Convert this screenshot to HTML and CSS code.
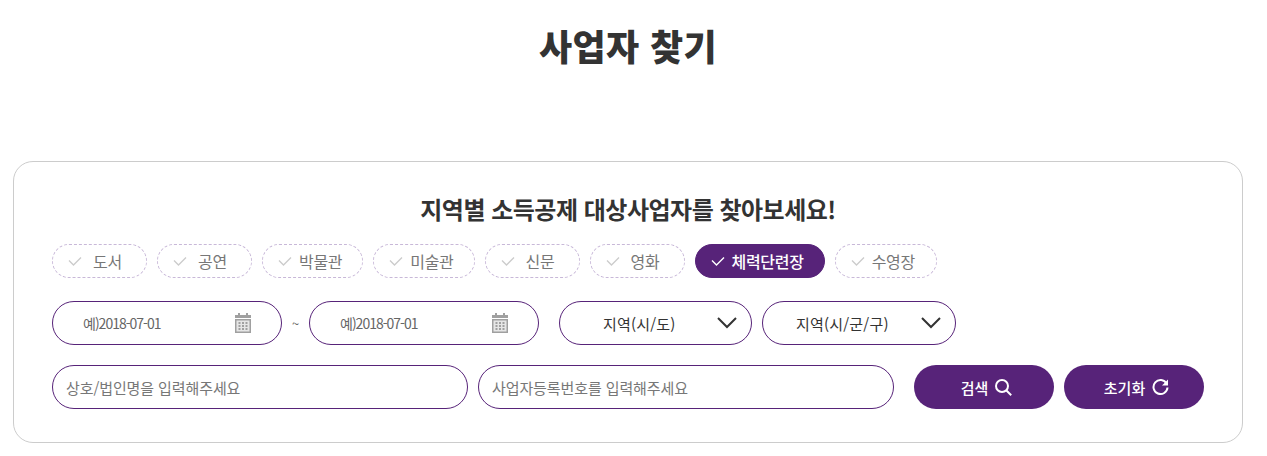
FILE: index.html
```html
<!DOCTYPE html>
<html lang="ko">
<head>
  <meta charset="UTF-8" />
  <meta name="viewport" content="width=device-width, initial-scale=1.0"/>
  <title>사업자 찾기</title>
  <link rel="stylesheet" href="styles.css">
</head>
<body>

<div class="page">
  <h1 class="page-title">사업자 찾기</h1>

  <div class="search-box">
    <h2 class="search-title">지역별 소득공제 대상사업자를 찾아보세요!</h2>

    <!-- 업종 선택 -->
    <div class="chips">
      <label class="chip"><svg class="check" viewBox="0 0 14 11"><path d="M1 4.5l4.5 4.5 7.5-7.5"/></svg><span class="chip-label">도서</span></label>
      <label class="chip"><svg class="check" viewBox="0 0 14 11"><path d="M1 4.5l4.5 4.5 7.5-7.5"/></svg><span class="chip-label">공연</span></label>
      <label class="chip"><svg class="check" viewBox="0 0 14 11"><path d="M1 4.5l4.5 4.5 7.5-7.5"/></svg><span class="chip-label">박물관</span></label>
      <label class="chip"><svg class="check" viewBox="0 0 14 11"><path d="M1 4.5l4.5 4.5 7.5-7.5"/></svg><span class="chip-label">미술관</span></label>
      <label class="chip"><svg class="check" viewBox="0 0 14 11"><path d="M1 4.5l4.5 4.5 7.5-7.5"/></svg><span class="chip-label">신문</span></label>
      <label class="chip"><svg class="check" viewBox="0 0 14 11"><path d="M1 4.5l4.5 4.5 7.5-7.5"/></svg><span class="chip-label">영화</span></label>
      <label class="chip active"><svg class="check" viewBox="0 0 14 11"><path d="M1 4.5l4.5 4.5 7.5-7.5"/></svg><span class="chip-label">체력단련장</span></label>
      <label class="chip wide"><svg class="check" viewBox="0 0 14 11"><path d="M1 4.5l4.5 4.5 7.5-7.5"/></svg><span class="chip-label">수영장</span></label>
    </div>

    <!-- 기간, 지역 -->
    <div class="row">
      <div class="date-field">
        <input type="text" class="date-input" placeholder="예)2018-07-01" />
        <svg class="calendar" viewBox="0 0 16 20">
          <path class="cal-top" d="M0 2h3V0h2v2h6V0h2v2h3v3H0z"/>
          <rect class="cal-frame" x="0.75" y="6.75" width="14.5" height="12.5"/>
          <path class="cal-cells" d="M3.5 9h2v2h-2zM7 9h2v2H7zM10.5 9h2v2h-2zM3.5 12h2v2h-2zM7 12h2v2H7zM10.5 12h2v2h-2zM3.5 15h2v2h-2zM7 15h2v2H7zM10.5 15h2v2h-2z"/>
        </svg>
      </div>
      <span class="tilde">~</span>
      <div class="date-field">
        <input type="text" class="date-input" placeholder="예)2018-07-01" />
        <svg class="calendar" viewBox="0 0 16 20">
          <path class="cal-top" d="M0 2h3V0h2v2h6V0h2v2h3v3H0z"/>
          <rect class="cal-frame" x="0.75" y="6.75" width="14.5" height="12.5"/>
          <path class="cal-cells" d="M3.5 9h2v2h-2zM7 9h2v2H7zM10.5 9h2v2h-2zM3.5 12h2v2h-2zM7 12h2v2H7zM10.5 12h2v2h-2zM3.5 15h2v2h-2zM7 15h2v2H7zM10.5 15h2v2h-2z"/>
        </svg>
      </div>
      <div class="select city">
        <span>지역(시/도)</span>
        <svg class="chevron" viewBox="0 0 20 12"><path d="M1 1l9 9 9-9"/></svg>
      </div>
      <div class="select district">
        <span>지역(시/군/구)</span>
        <svg class="chevron" viewBox="0 0 20 12"><path d="M1 1l9 9 9-9"/></svg>
      </div>
    </div>

    <!-- 상호, 사업자번호 -->
    <div class="row last">
      <input type="text" class="text-input" placeholder="상호/법인명을 입력해주세요" />
      <input type="text" class="text-input" placeholder="사업자등록번호를 입력해주세요" />
      <div class="buttons">
        <button type="button" class="btn">검색
          <svg class="btn-icon" viewBox="0 0 17 17"><circle cx="7" cy="7" r="6"/><path d="M11.2 11.2l5 5"/></svg>
        </button>
        <button type="button" class="btn">초기화
          <svg class="btn-icon" viewBox="0 0 17 17"><path d="M14.6 4.6A7 7 0 1 0 15.5 8.5"/><path class="arrow" d="M16 .5v6h-6z"/></svg>
        </button>
      </div>
    </div>
  </div>
</div>

</body>
</html>
```

FILE: styles.css
```css
* {
  box-sizing: border-box;
}

body {
  margin: 0;
  padding: 0;
  background-color: #fff;
  font-family: "Noto Sans CJK KR", "Noto Sans", sans-serif;
  color: #333;
}

.page {
  width: 1230px;
  margin-left: 13px;
}

.page-title {
  margin: 0;
  height: 161px;
  padding-top: 19px;
  font-size: 36px;
  line-height: 52px;
  font-weight: 900;
  letter-spacing: 0.4px;
  text-align: center;
}

.search-box {
  height: 282px;
  padding: 29px 38px 0;
  border: 1px solid #ccc;
  border-radius: 20px;
}

.search-title {
  margin: 0 0 18px;
  font-size: 24px;
  line-height: 35px;
  font-weight: 700;
  letter-spacing: -0.5px;
  text-align: center;
}

.chips {
  display: flex;
  gap: 10px;
  margin-bottom: 23px;
}

.chip {
  display: flex;
  align-items: center;
  height: 34px;
  padding: 0 20px 0 15px;
  border: 1px dashed #c8b8d8;
  border-radius: 17px;
  color: #777;
  font-size: 16px;
  letter-spacing: -0.3px;
}

.chip.wide {
  padding-right: 21px;
}

.chip.active {
  background-color: #572379;
  border: 1px solid #572379;
  color: #fff;
  font-weight: 500;
}

.check {
  width: 14px;
  height: 11px;
  margin-right: 7px;
  fill: none;
  stroke: #ccc;
  stroke-width: 1.4;
}

.chip.active .check {
  stroke: #fff;
}

.chip-label {
  min-width: 37px;
  text-align: center;
}

.row {
  display: flex;
  align-items: center;
  margin-bottom: 20px;
}

.date-field {
  display: flex;
  align-items: center;
  width: 230px;
  height: 44px;
  padding: 0 30px;
  border: 1px solid #572379;
  border-radius: 22px;
}

.date-input {
  flex: 1;
  min-width: 0;
  padding: 0;
  border: none;
  outline: none;
  font-family: inherit;
  font-size: 14px;
  letter-spacing: -1px;
}

.date-input::placeholder {
  color: #666;
  opacity: 1;
}

.calendar {
  flex: none;
  width: 16px;
  height: 20px;
}

.cal-top {
  fill: #a0a0a0;
}

.cal-frame {
  fill: #e6e6e6;
  stroke: #a0a0a0;
  stroke-width: 1.5;
}

.cal-cells {
  fill: #a0a0a0;
}

.tilde {
  width: 27px;
  color: #666;
  font-size: 13px;
  text-align: center;
}

.select {
  display: flex;
  align-items: center;
  justify-content: space-between;
  height: 44px;
  border: 1px solid #572379;
  border-radius: 22px;
  font-size: 15px;
  letter-spacing: 0.2px;
  color: #333;
}

.city {
  width: 193px;
  margin-left: 20px;
  padding: 0 14px 0 43px;
}

.district {
  width: 194px;
  margin-left: 10px;
  padding: 0 14px 0 33px;
}

.chevron {
  width: 20px;
  height: 12px;
  fill: none;
  stroke: #333;
  stroke-width: 2;
}

.text-input {
  width: 416px;
  height: 44px;
  margin-right: 10px;
  padding: 0 13px;
  border: 1px solid #572379;
  border-radius: 22px;
  outline: none;
  font-family: inherit;
  font-size: 15px;
  letter-spacing: -0.1px;
}

.text-input::placeholder {
  color: #777;
  opacity: 1;
}

.buttons {
  display: flex;
  gap: 10px;
  margin-left: 10px;
}

.btn {
  display: flex;
  align-items: center;
  justify-content: center;
  gap: 7px;
  width: 140px;
  height: 44px;
  padding: 0 0 0 5px;
  background-color: #572379;
  border: none;
  border-radius: 22px;
  color: #fff;
  font-family: inherit;
  font-size: 15px;
  font-weight: 500;
  cursor: pointer;
}

.btn-icon {
  width: 17px;
  height: 17px;
  fill: none;
  stroke: #fff;
  stroke-width: 2;
}

.btn-icon .arrow {
  fill: #fff;
  stroke: none;
}
```
